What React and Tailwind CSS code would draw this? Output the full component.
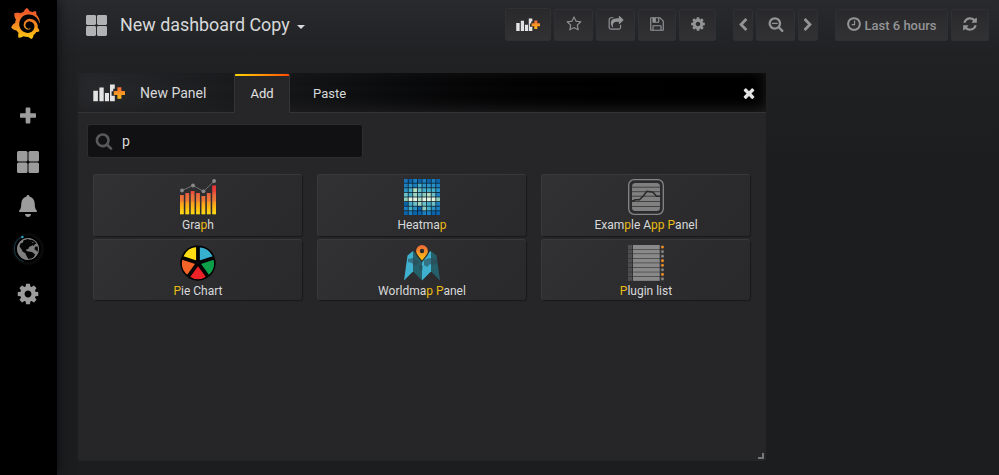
import React from "react";
import { SiGrafana } from "react-icons/si";

const PATHS = {
  star: "M1201 1004l306-297-422-62-189-382-189 382-422 62 306 297-73 421 378-199 377 199zm527-357q0 22-26 48l-363 354 86 500q1 7 1 20 0 50-41 50-19 0-40-12l-449-236-449 236q-22 12-40 12-21 0-31.5-14.5t-10.5-35.5q0-6 2-20l86-500-364-354q-25-27-25-48 0-37 56-46l502-73 225-455q19-41 49-41t49 41l225 455 502 73q56 9 56 46z",
  share: "M1472 989v259q0 119-84.5 203.5t-203.5 84.5h-832q-119 0-203.5-84.5t-84.5-203.5v-832q0-119 84.5-203.5t203.5-84.5h255q13 0 22.5 9.5t9.5 22.5q0 27-26 32-77 26-133 60-10 4-16 4h-112q-66 0-113 47t-47 113v832q0 66 47 113t113 47h832q66 0 113-47t47-113v-214q0-19 18-29 28-13 54-37 16-16 35-8 21 9 21 29zm237-496l-384 384q-18 19-45 19-12 0-25-5-39-17-39-59v-192h-160q-323 0-438 131-119 137-74 473 3 23-20 34-8 2-12 2-16 0-26-13-10-14-21-31t-39.5-68.5-49.5-99.5-38.5-114-17.5-122q0-49 3.5-91t14-90 28-88 47-81.5 68.5-74 94.5-61.5 124.5-48.5 159.5-30.5 196.5-11h160v-192q0-42 39-59 13-5 25-5 26 0 45 19l384 384q19 19 19 45t-19 45z",
  save: "M512 1536h768v-384h-768v384zm896 0h128v-896q0-14-10-38.5t-20-34.5l-281-281q-10-10-34-20t-39-10v416q0 40-28 68t-68 28h-576q-40 0-68-28t-28-68v-416h-128v1280h128v-416q0-40 28-68t68-28h832q40 0 68 28t28 68v416zm-384-928v-320q0-13-9.5-22.5t-22.5-9.5h-192q-13 0-22.5 9.5t-9.5 22.5v320q0 13 9.5 22.5t22.5 9.5h192q13 0 22.5-9.5t9.5-22.5zm640 32v928q0 40-28 68t-68 28h-1344q-40 0-68-28t-28-68v-1344q0-40 28-68t68-28h928q40 0 88 20t76 48l280 280q28 28 48 76t20 88z",
  cog: "M1152 896q0-106-75-181t-181-75-181 75-75 181 75 181 181 75 181-75 75-181zm512-109v222q0 12-8 23t-20 13l-185 28q-19 54-39 91 35 50 107 138 10 12 10 25t-9 23q-27 37-99 108t-94 71q-12 0-26-9l-138-108q-44 23-91 38-16 136-29 186-7 28-36 28h-222q-14 0-24.5-8.5t-11.5-21.5l-28-184q-49-16-90-37l-141 107q-10 9-25 9-14 0-25-11-126-114-165-168-7-10-7-23 0-12 8-23 15-21 51-66.5t54-70.5q-27-50-41-99l-183-27q-13-2-21-12.5t-8-23.5v-222q0-12 8-23t19-13l186-28q14-46 39-92-40-57-107-138-10-12-10-24 0-10 9-23 26-36 98.5-107.5t94.5-71.5q13 0 26 10l138 107q44-23 91-38 16-136 29-186 7-28 36-28h222q14 0 24.5 8.5t11.5 21.5l28 184q49 16 90 37l142-107q9-9 24-9 13 0 25 10 129 119 165 170 7 8 7 22 0 12-8 23-15 21-51 66.5t-54 70.5q26 50 41 98l183 28q13 2 21 12.5t8 23.5z",
  zoomOut: "M1088 800v64q0 13-9.5 22.5t-22.5 9.5h-576q-13 0-22.5-9.5t-9.5-22.5v-64q0-13 9.5-22.5t22.5-9.5h576q13 0 22.5 9.5t9.5 22.5zm128 32q0-185-131.5-316.5t-316.5-131.5-316.5 131.5-131.5 316.5 131.5 316.5 316.5 131.5 316.5-131.5 131.5-316.5zm512 832q0 53-37.5 90.5t-90.5 37.5q-54 0-90-38l-343-342q-179 124-399 124-143 0-273.5-55.5t-225-150-150-225-55.5-273.5 55.5-273.5 150-225 225-150 273.5-55.5 273.5 55.5 225 150 150 225 55.5 273.5q0 220-124 399l343 343q37 37 37 90z",
  search: "M1216 832q0-185-131.5-316.5t-316.5-131.5-316.5 131.5-131.5 316.5 131.5 316.5 316.5 131.5 316.5-131.5 131.5-316.5zm512 832q0 53-37.5 90.5t-90.5 37.5q-54 0-90-38l-343-342q-179 124-399 124-143 0-273.5-55.5t-225-150-150-225-55.5-273.5 55.5-273.5 150-225 225-150 273.5-55.5 273.5 55.5 225 150 150 225 55.5 273.5q0 220-124 399l343 343q37 37 37 90z",
  clock: "M1024 544v448q0 14-9 23t-23 9h-320q-14 0-23-9t-9-23v-64q0-14 9-23t23-9h224v-352q0-14 9-23t23-9h64q14 0 23 9t9 23zm416 352q0-148-73-273t-198-198-273-73-273 73-198 198-73 273 73 273 198 198 273 73 273-73 198-198 73-273zm224 0q0 209-103 385.5t-279.5 279.5-385.5 103-385.5-103-279.5-279.5-103-385.5 103-385.5 279.5-279.5 385.5-103 385.5 103 279.5 279.5 103 385.5z",
  refresh: "M1639 1056q0 5-1 7-64 268-268 434.5t-478 166.5q-146 0-282.5-55t-243.5-157l-129 129q-19 19-45 19t-45-19-19-45v-448q0-26 19-45t45-19h448q26 0 45 19t19 45-19 45l-137 137q71 66 161 102t187 36q134 0 250-65t186-179q11-17 53-117 8-23 30-23h192q13 0 22.5 9.5t9.5 22.5zm25-800v448q0 26-19 45t-45 19h-448q-26 0-45-19t-19-45 19-45l138-138q-148-137-349-137-134 0-250 65t-186 179q-11 17-53 117-8 23-30 23h-199q-13 0-22.5-9.5t-9.5-22.5v-7q65-268 270-434.5t480-166.5q146 0 284 55.5t245 156.5l130-129q19-19 45-19t45 19 19 45z",
  left: "M1427 301l-531 531 531 531q19 19 19 45t-19 45l-166 166q-19 19-45 19t-45-19l-742-742q-19-19-19-45t19-45l742-742q19-19 45-19t45 19l166 166q19 19 19 45t-19 45z",
  right: "M1363 877l-742 742q-19 19-45 19t-45-19l-166-166q-19-19-19-45t19-45l531-531-531-531q-19-19-19-45t19-45l166-166q19-19 45-19t45 19l742 742q19 19 19 45t-19 45z",
  times: "M1490 1322q0 40-28 68l-136 136q-28 28-68 28t-68-28l-294-294-294 294q-28 28-68 28t-68-28l-136-136q-28-28-28-68t28-68l294-294-294-294q-28-28-28-68t28-68l136-136q28-28 68-28t68 28l294 294 294-294q28-28 68-28t68 28l136 136q28 28 28 68t-28 68l-294 294 294 294q28 28 28 68z",
};

function Icon({ name, size = 16, className = "" }) {
  return (
    <svg width={size} height={size} viewBox="0 0 1792 1792" fill="currentColor" className={"shrink-0 " + className}>
      <path d={PATHS[name]} />
    </svg>
  );
}

function AddPanelIcon({ width, id }) {
  return (
    <svg width={width} height={(width * 18) / 32} viewBox="0 0 32 18" className="shrink-0">
      <defs>
        <linearGradient id={id} x1="0" y1="0" x2="0" y2="1">
          <stop offset="0" stopColor="#f1663a" />
          <stop offset="1" stopColor="#fdbe12" />
        </linearGradient>
      </defs>
      <g fill="#e3e3e3">
        <path d="M0.3 6.7h4.6v10.6H0.3zM6.4 3.5h4.3v13.8H6.4zM11.9 9h4.1v8.3h-4.1z" />
        <path d="M17 0.5h4.8v4.2h-1.6v2.5h-1.6v4.6h3.2v5.5H17z" />
      </g>
      <path d="M24.4 3.2h4v3.9H32v3.8h-3.6v3.9h-4v-3.9h-3.6V7.1h3.6z" fill={`url(#${id})`} />
    </svg>
  );
}

function AppsIcon({ size }) {
  return (
    <svg width={size} height={size} viewBox="0 0 22 22" fill="currentColor">
      <rect x="0" y="0" width="10.5" height="10.5" rx="1.5" />
      <rect x="11.5" y="0" width="10.5" height="10.5" rx="1.5" />
      <rect x="0" y="11.5" width="10.5" height="10.5" rx="1.5" />
      <rect x="11.5" y="11.5" width="10.5" height="10.5" rx="1.5" />
    </svg>
  );
}

function GlobeIcon() {
  return (
    <svg width="34" height="34" viewBox="0 0 34 34">
      <defs>
        <radialGradient id="globeGlow">
          <stop offset="0.75" stopColor="#121212" />
          <stop offset="1" stopColor="#000" />
        </radialGradient>
      </defs>
      <circle cx="17" cy="17" r="17" fill="url(#globeGlow)" />
      <circle cx="17" cy="17" r="13.4" fill="#000" />
      <path d="M11 4.8A13.4 13.4 0 0 0 12.5 29.6" fill="none" stroke="#164f60" strokeWidth="0.7" />
      <circle cx="11.4" cy="5" r="1.2" fill="#2aa5c9" />
      <circle cx="17" cy="17" r="10.8" fill="#7f7f7f" />
      <path
        d="M8.500 14.500l1-3 2.500-1 .5-2.200 4.200-1.500 3.400 1.500 1 2.200 1.400.8-2 2.700-2.200.7-1.100 2.300-2 .6.200 1.400 2.200.6 3.400.4 3 2.200-1 3.200-2.600 1.600-1.600 2.600-1.800-3.200-1.600-2.600-1-2.600-2.600-1.400-1.600-3z"
        fill="#060606"
      />
      <path d="M19.500 7.200l3.600 1.100 3.200 3.400-2.200.3-1.400 1.900-1.800-.9 1.800-2.600-2.600-.8z" fill="#060606" />
      <path d="M24 14.800l2.700-.6.800 3.800-1.200 2-1.500-2-1.400-.6z" fill="#060606" />
      <circle cx="17" cy="17" r="10.500" fill="none" stroke="#858585" strokeWidth="0.900" />
    </svg>
  );
}

function Sidebar() {
  return (
    <aside className="z-10 flex w-[57px] shrink-0 flex-col items-center bg-black pr-px text-[#9c9c9c] shadow-[0_0_12px_#0b0c0e]">
      <svg width="0" height="0">
        <defs>
          <linearGradient id="logoFill" x1="0" y1="0" x2="0" y2="1">
            <stop offset="0.15" stopColor="#f15b2a" />
            <stop offset="0.55" stopColor="#f68b20" />
            <stop offset="1" stopColor="#fccc10" />
          </linearGradient>
        </defs>
      </svg>
      <div className="flex h-[93px] w-full justify-center pt-[8px] pr-[6px]">
        <SiGrafana size={31} fill="url(#logoFill)" />
      </div>
      <div className="flex h-[45px] items-center">
        <svg width="16" height="17" viewBox="0 0 17 17" fill="currentColor">
          <path d="M6 1a1 1 0 0 1 1-1h3a1 1 0 0 1 1 1v5h5a1 1 0 0 1 1 1v3a1 1 0 0 1-1 1h-5v5a1 1 0 0 1-1 1H7a1 1 0 0 1-1-1v-5H1a1 1 0 0 1-1-1V7a1 1 0 0 1 1-1h5z" />
        </svg>
      </div>
      <div className="flex h-[47px] items-center">
        <AppsIcon size={22} />
      </div>
      <div className="flex h-[41px] items-center">
        <svg width="18" height="22" viewBox="0 0 18 22" fill="currentColor">
          <path d="M9 0c.9 0 1.4.6 1.4 1.4 3.4.8 5.1 3.5 5.3 7 .2 3.8.5 5.6 2.1 7.1.4.6.2 1.5-.6 1.5H.8c-.8 0-1-.9-.6-1.5 1.6-1.5 1.9-3.3 2.1-7.1.2-3.5 1.900-6.200 5.300-7C7.600.6 8.100 0 9 0z" />
          <path d="M6 19h6c-.2 1.700-1.400 3-3 3s-2.800-1.300-3-3z" />
        </svg>
      </div>
      <div className="flex h-[46px] items-center">
        <GlobeIcon />
      </div>
      <div className="flex h-[44px] items-center">
        <Icon name="cog" size={24} />
      </div>
    </aside>
  );
}

function ToolButton({ className, children }) {
  return (
    <button
      className={
        "flex h-8 items-center justify-center rounded-[2px] border border-[#303033] bg-linear-to-b from-[#29292b] to-[#323234] text-[#939496] " +
        className
      }
    >
      {children}
    </button>
  );
}

function Navbar() {
  return (
    <header className="flex h-[55px] items-start justify-between bg-linear-to-b from-[#292a2d] to-[#202123] pr-[10px] pl-[29px]">
      <div className="flex h-[50px] items-center text-[#d8d9da]">
        <span className="text-[#b1b2b3]">
          <AppsIcon size={21} />
        </span>
        <span className="mb-px ml-[13px] text-[17.9px] leading-[27px]">New dashboard Copy</span>
        <span className="mt-[4px] ml-[7px] border-x-[4px] border-t-[4px] border-x-transparent border-t-[#d8d9da]" />
      </div>
      <div className="flex items-end gap-[3px] pt-[8px]">
        <ToolButton className="h-[33px] w-[46px]">
          <AddPanelIcon width={24} id="plusSmall" />
        </ToolButton>
        <ToolButton className="w-[39px] pb-[2px]"><Icon name="star" /></ToolButton>
        <ToolButton className="w-[39px] pb-[2px]"><Icon name="share" /></ToolButton>
        <ToolButton className="w-[38px] pb-[2px]"><Icon name="save" /></ToolButton>
        <ToolButton className="w-[37px] pb-[2px]"><Icon name="cog" /></ToolButton>
        <ToolButton className="ml-[14px] w-[20px]"><Icon name="left" size={14} /></ToolButton>
        <ToolButton className="w-[39px] pb-[2px]"><Icon name="zoomOut" /></ToolButton>
        <ToolButton className="w-[20px]"><Icon name="right" size={14} /></ToolButton>
        <ToolButton className="ml-[14px] w-[113px] gap-[2px] text-[13px] font-medium">
          <Icon name="clock" className="mb-[2px]" />
          <span className="mt-px">Last 6 hours</span>
        </ToolButton>
        <ToolButton className="w-[38px] pb-[2px]"><Icon name="refresh" /></ToolButton>
      </div>
    </header>
  );
}

function GraphIcon() {
  const tops = [16, 14, 12, 14, 17, 14, 6.5];
  return (
    <svg width="36" height="36" viewBox="0 0 36 36">
      <defs>
        <linearGradient id="graphBars" gradientUnits="userSpaceOnUse" x1="0" y1="6" x2="0" y2="35">
          <stop offset="0" stopColor="#ea3339" />
          <stop offset="0.2" stopColor="#ea3d3a" />
          <stop offset="0.35" stopColor="#e86a3c" />
          <stop offset="0.55" stopColor="#ee7b35" />
          <stop offset="0.6" stopColor="#f7991f" />
          <stop offset="0.78" stopColor="#fdb813" />
          <stop offset="1" stopColor="#ffdb15" />
        </linearGradient>
      </defs>
      {tops.map((top, i) => (
        <rect key={i} x={i * 5.37} y={top} width="3.800" height={35.300 - top} fill="url(#graphBars)" />
      ))}
      <path d="M2 11.500L13 6.500L23.500 12.300L34.300 2" fill="none" stroke="#7d7d7d" strokeWidth="0.800" />
      <g fill="#898989">
        <circle cx="2" cy="11.500" r="1.900" />
        <circle cx="13" cy="6.500" r="1.900" />
        <circle cx="23.500" cy="12.300" r="1.900" />
        <circle cx="34.100" cy="2" r="1.900" />
      </g>
    </svg>
  );
}

const HEAT = [
  ["#1872b8", "#0c64ad", "#1b7fc0", "#0c64ad", "#1b7fc0", "#0c64ad", "#1b7fc0", "#0c64ad"],
  ["#1b7fc0", "#2b92c8", "#1b7fc0", "#46aec9", "#2b92c8", "#2b92c8", "#2b92c8", "#1b7fc0"],
  ["#2b92c8", "#46aec9", "#b4dcc0", "#6dc0c8", "#46aec9", "#46aec9", "#46aec9", "#2b92c8"],
  ["#6dc0c8", "#46aec9", "#a2d6c0", "#6dc0c8", "#8fcdc0", "#b4dcc0", "#6dc0c8", "#1b7fc0"],
  ["#8fcdb8", "#e5f3df", "#e5f3df", "#b4dcc0", "#e5f3df", "#e5f3df", "#e5f3df", "#8fcdb8"],
  ["#0c64ad", "#46aec9", "#6dc0c8", "#a2d6c0", "#6dc0c8", "#46aec9", "#6dc0c8", "#1b7fc0"],
  ["#1b7fc0", "#46aec9", "#2b92c8", "#0c64ad", "#8fcdc0", "#46aec9", "#2b92c8", "#1b7fc0"],
  ["#0c64ad", "#1b7fc0", "#0c64ad", "#0c64ad", "#1b7fc0", "#1b7fc0", "#0c64ad", "#0c64ad"],
];

function HeatmapIcon() {
  return (
    <svg width="36" height="36" viewBox="0 0 36 36">
      <rect width="36" height="36" fill="#0c2130" />
      {HEAT.map((row, y) =>
        row.map((c, x) => <rect key={`${x}-${y}`} x={x * 4.6} y={y * 4.6} width="3.800" height="3.800" fill={c} />)
      )}
    </svg>
  );
}

function AppPanelIcon() {
  return (
    <svg width="36" height="36" viewBox="0 0 36 36">
      <rect x="0.700" y="0.700" width="34.600" height="34.600" rx="5.500" fill="#2b2b2d" stroke="#868686" strokeWidth="1.300" />
      <rect x="4" y="4" width="28" height="28" rx="3.500" fill="#808080" />
      <path d="M4 8.200h28M4 12.700h28M4 17.200h28M4 22.500h28M4 27.500h28" stroke="#3a3a3c" strokeWidth="0.900" />
      <path d="M4 22.300l3.500-1.500h4l4-4 3.500-4.500 6 1 3.500 4h3.500" fill="none" stroke="#29292b" strokeWidth="1.600" strokeLinejoin="round" />
    </svg>
  );
}

function PieIcon() {
  const colors = ["#37afce", "#0e9f4a", "#eb2227", "#f26427", "#ffdd15"];
  return (
    <svg width="36" height="36" viewBox="0 0 36 36">
      <circle cx="18" cy="18" r="17" fill="#111" />
      {colors.map((c, i) => (
        <path
          key={c}
          d="M18 16.800V1.500A16.500 16.500 0 0 1 32.700 12Z"
          transform={`rotate(${i * 72} 18 18) translate(1 -0.200)`}
          fill={c}
          stroke="#000"
          strokeWidth="1.700"
          strokeLinejoin="round"
        />
      ))}
    </svg>
  );
}

function WorldmapIcon() {
  return (
    <svg width="36" height="36" viewBox="0 0 36 36">
      <defs>
        <linearGradient id="pinFill" x1="0" y1="0" x2="0" y2="1">
          <stop offset="0" stopColor="#f0663a" />
          <stop offset="1" stopColor="#fdc70e" />
        </linearGradient>
      </defs>
      <path d="M3.500 10.500L9 6v20.500L0 35.500z" fill="#3fb1cf" />
      <path d="M9 6l9 6v23.500l-9-9z" fill="#245f6a" />
      <path d="M18 12l9-6v20.500l-9 9z" fill="#3fb1cf" />
      <path d="M27 6l5.500 4.500L36 35.500l-9-9z" fill="#245f6a" />
      <path d="M4 14l5-1 2 2 4 1-2 4-3 1-2-3-4-1zM15 20l4 1-1 5-2-1zM20 15l5-2 7 1 1 4-4 2-3-1-3 3-3-2z" fill="#2d4a55" opacity="0.600" />
      <path d="M18 17.400C15.300 13.400 11 10 11 6.600a7 7 0 0 1 14 0C25 10 20.700 13.400 18 17.400z" fill="#2a2a2c" />
      <path d="M18 15.500C15.600 12 12.100 9.300 12.100 6a5.900 5.900 0 0 1 11.800 0c0 3.300-3.500 6-5.900 9.500z" fill="url(#pinFill)" />
      <circle cx="18" cy="6" r="2.200" fill="#2a2a2c" />
    </svg>
  );
}

function PluginListIcon() {
  const dots = [true, false, false, true, true, false, true, false];
  return (
    <svg width="36" height="36" viewBox="0 0 36 36">
      {dots.map((hot, i) => (
        <g key={i}>
          <rect x="0" y={i * 4.550} width="4.200" height="4" fill="#4e4e50" />
          <rect x="5" y={i * 4.550} width="26.700" height="4" fill="#898989" />
          <rect x="32.300" y={i * 4.550} width="3.700" height="4" fill="#3a3a3b" />
          <circle cx="34.500" cy={i * 4.550 + 2.100} r={1.400} fill={hot ? "#f68e1f" : "#858585"} />
        </g>
      ))}
    </svg>
  );
}

function Label({ text }) {
  return (
    <span className="mt-[2px] text-[12px] leading-4 whitespace-pre">
      {text.split(/(p)/i).map((part, i) =>
        part.toLowerCase() === "p" ? (
          <span key={i} className="text-[#ecbb13]">{part}</span>
        ) : (
          part
        )
      )}
    </span>
  );
}

const PLUGINS = [
  { name: "Graph", icon: GraphIcon },
  { name: "Heatmap", icon: HeatmapIcon },
  { name: "Example App Panel", icon: AppPanelIcon },
  { name: "Pie Chart", icon: PieIcon },
  { name: "Worldmap Panel", icon: WorldmapIcon },
  { name: "Plugin list", icon: PluginListIcon },
];

function AddPanel() {
  return (
    <section className="relative flex h-[388px] w-[688px] flex-col rounded-[2px] bg-[#262628]">
      <div className="flex h-10 items-stretch bg-linear-to-r from-[#292a2d] to-black shadow-[inset_0_-4px_14px_#1f1f20]">
        <div className="flex w-[156px] items-center border-b border-[#343436] pl-[15px]">
          <AddPanelIcon width={32} id="plusLarge" />
          <span className="mt-[2px] ml-[15px] text-[14px] text-[#d8d9da]">New Panel</span>
        </div>
        <div className="flex w-[56px] flex-col overflow-hidden rounded-t-[3px] border-x border-[#343436] bg-[#262628] pt-px">
          <div className="-mx-px h-[2px] bg-linear-to-r from-[#ffd500] to-[#ff4400]" />
          <div className="flex grow items-center justify-center pb-[2px] text-[13px] text-[#e3e3e3]">Add</div>
        </div>
        <div className="flex grow items-center justify-between border-b border-[#343436] pt-[2px] pr-[9px] pl-[23px] text-[13px] text-[#d8d9da]">
          <span>Paste</span>
          <Icon name="times" size={16} className="mb-[2px] text-[#e3e3e3]" />
        </div>
      </div>
      <div className="px-[9px] pt-[11px]">
        <div className="flex h-[34px] w-[276px] items-center rounded-[3px] border border-[#2d2d30] bg-[#111113] pl-[7px] text-[14px] text-[#d8d9da]">
          <Icon name="search" size={18} className="text-[#58595b]" />
          <span className="ml-[9px]">p</span>
        </div>
      </div>
      <div className="mt-4 grid grid-cols-[209px_209px_209px] gap-x-[15px] gap-y-[3px] pl-[15px]">
        {PLUGINS.map(({ name, icon: PluginIcon }) => (
          <div
            key={name}
            className="flex h-[62px] flex-col items-center rounded-[3px] border-t border-l border-[#39393b] bg-linear-135 from-[#313133] to-[#29292b] pt-[4px] text-[#d8d9da] shadow-[1px_1px_1px_#19191a] nth-[n+4]:h-[61px] nth-[n+4]:pt-[5px]"
          >
            <PluginIcon />
            <Label text={name} />
          </div>
        ))}
      </div>
      <span className="absolute right-[2px] bottom-[2px] size-[6px] border-r-2 border-b-2 border-[#77777a]" />
    </section>
  );
}

export default function App() {
  return (
    <div className="flex h-[475px] w-[999px] overflow-hidden bg-[#1e1f21] font-[Roboto,sans-serif]">
      <Sidebar />
      <div className="flex grow flex-col bg-linear-to-b from-[#222426] to-[#1c1d1f] to-[160px]">
        <Navbar />
        <main className="pt-[18px] pl-[21px]">
          <AddPanel />
        </main>
      </div>
    </div>
  );
}
